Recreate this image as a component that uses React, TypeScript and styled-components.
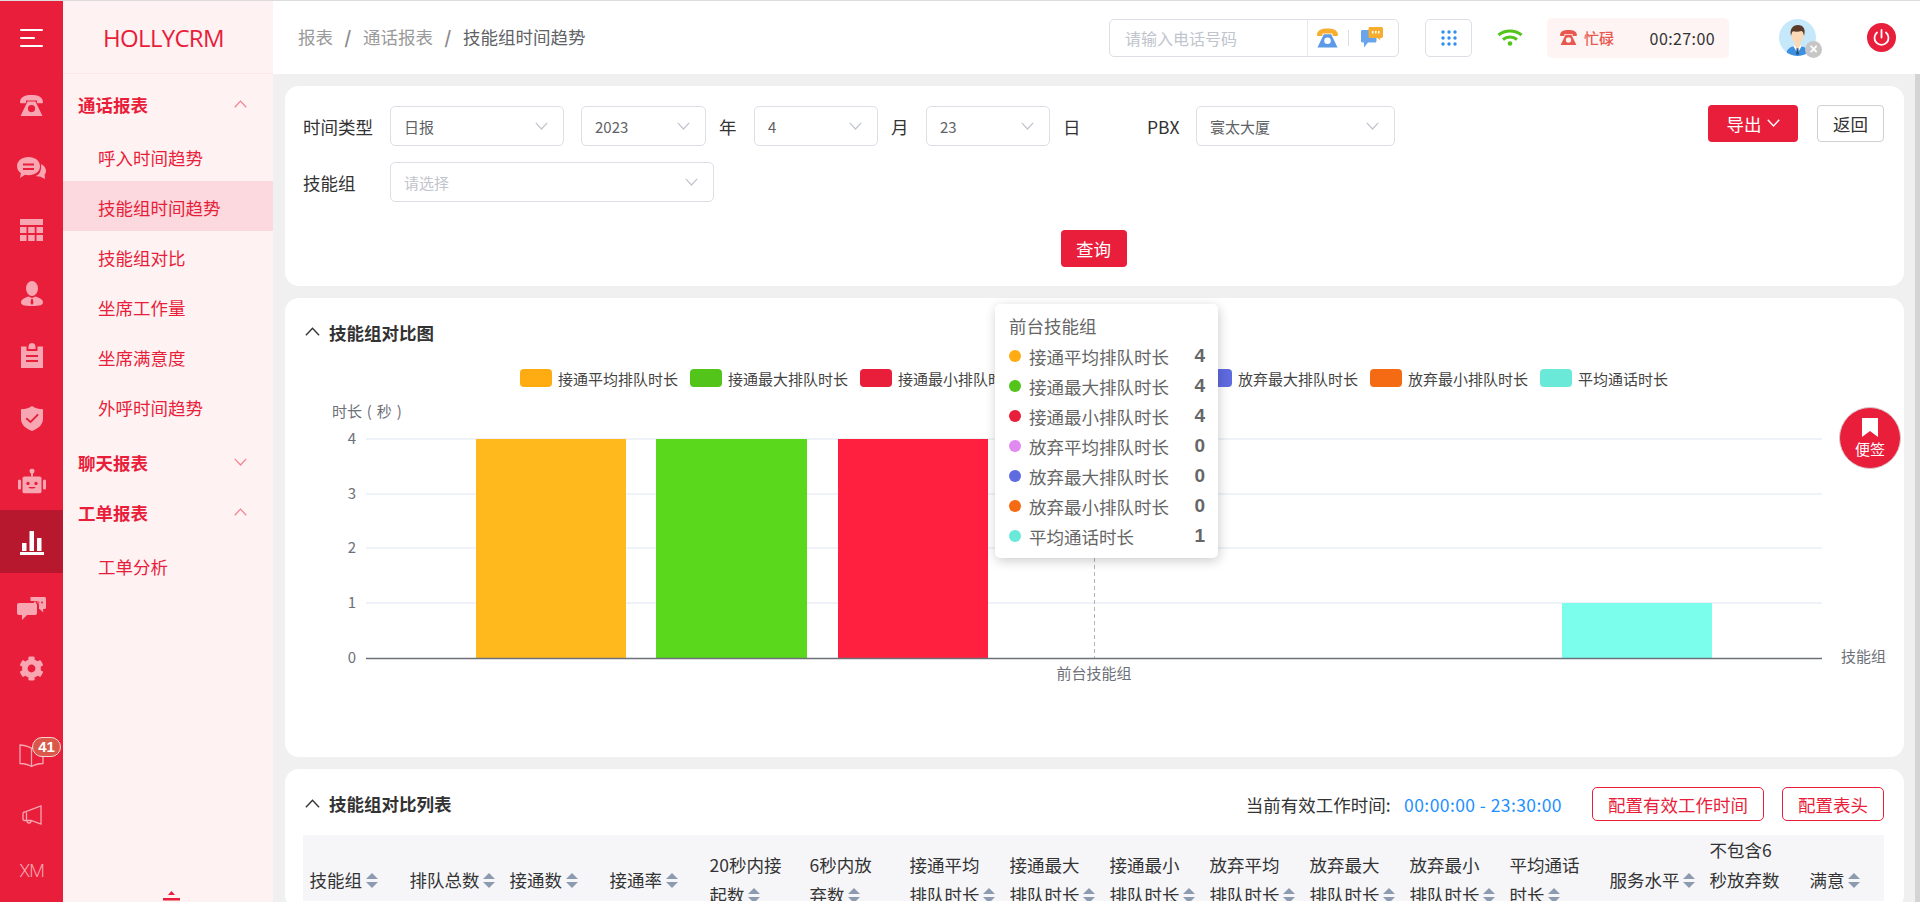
import React from "react";
import styled, { createGlobalStyle } from "styled-components";
import { FaCog } from "react-icons/fa";

const RED = "#e81e3a";
const SOFT = "#f8a6b2";
const FONT = `"Noto Sans CJK SC", "Noto Sans", sans-serif`;

const Global = createGlobalStyle`
  html, body { margin: 0; padding: 0; height: 100%; overflow: hidden; background: #f0f0f0; }
  body { font-family: ${FONT}; color: #333; }
  #root { height: 100%; }
  * { box-sizing: border-box; }
`;

const Page = styled.div`
  position: relative;
  display: flex;
  width: 1920px;
  height: 902px;
  border-top: 1px solid #dcdcdc;
  overflow: hidden;
`;

/* ---------- icon rail ---------- */
const Rail = styled.nav`
  width: 63px;
  flex: none;
  display: flex;
  flex-direction: column;
  background: ${RED};
  color: ${SOFT};
`;
const RailTop = styled.div`
  height: 73.5px;
  display: flex;
  align-items: center;
  justify-content: center;
  color: #fff;
`;
const RailItem = styled.div<{ $active?: boolean; $shift?: number; $h?: number }>`
  position: relative;
  height: ${(p) => p.$h ?? 62.25}px;
  flex: none;
  display: flex;
  align-items: center;
  justify-content: center;
  background: ${(p) => (p.$active ? "#b7182e" : "transparent")};
  color: ${(p) => (p.$active ? "#fff" : SOFT)};
  & > svg { transform: translateY(${(p) => p.$shift ?? 0}px); }
`;
const RailBottom = styled.div`
  margin-top: auto;
  padding-bottom: 1px;
`;
const Badge = styled.span`
  position: absolute;
  left: 32px;
  top: 16px;
  width: 29px;
  height: 20px;
  border: 1px solid #fbd5d5;
  border-radius: 10px;
  background: #d9584a;
  color: #fff;
  font: 700 15px/18px "Liberation Sans", sans-serif;
  text-align: center;
`;
const RailText = styled.span`
  font: 300 18px/1 Roboto, sans-serif;
  letter-spacing: -1px;
  color: ${SOFT};
`;

/* ---------- secondary nav ---------- */
const SubNav = styled.aside`
  width: 210px;
  flex: none;
  display: flex;
  flex-direction: column;
  background: #fef2f3;
  color: ${RED};
`;
const Logo = styled.div`
  height: 73px;
  flex: none;
  display: flex;
  align-items: center;
  justify-content: center;
  padding-right: 9px;
  border-bottom: 1px solid #fbe8ea;
  font: 400 24px "Open Sans", sans-serif;
  letter-spacing: -0.7px;
`;
const NavBody = styled.div`
  padding-top: 6px;
`;
const SectionTitle = styled.div`
  height: 50px;
  display: flex;
  align-items: center;
  justify-content: space-between;
  padding: 0 26px 2px 15px;
  font-size: 17.5px;
  font-weight: 700;
  & > svg { color: #f4808f; }
`;
const SubList = styled.div<{ $top?: number }>`
  padding: ${(p) => p.$top ?? 1}px 0 7px;
`;
const SubItem = styled.div<{ $active?: boolean }>`
  height: 50px;
  display: flex;
  align-items: center;
  padding: 3px 0 0 35px;
  font-size: 17.5px;
  background: ${(p) => (p.$active ? "#fbd9de" : "transparent")};
`;
const Collapse = styled.div`
  margin-top: auto;
  height: 20px;
  padding-left: 100px;
`;

/* ---------- main + header ---------- */
const Main = styled.main`
  flex: 1;
  min-width: 0;
  display: flex;
  flex-direction: column;
`;
const Header = styled.header`
  height: 73px;
  flex: none;
  display: flex;
  align-items: center;
  padding: 0 24px 0 25px;
  background: #fff;
`;
const Crumbs = styled.div`
  display: flex;
  align-items: center;
  margin-top: -3px;
  font-size: 17.5px;
  color: #9a9a9a;
`;
const CrumbSep = styled.span`
  width: 30px;
  text-align: center;
  font-weight: 700;
  color: #8a8a8a;
`;
const CrumbLast = styled.span`
  color: #606266;
`;
const SearchBox = styled.div`
  margin-left: auto;
  width: 290px;
  height: 38px;
  display: flex;
  border: 1px solid #dcdfe6;
  border-radius: 5px;
`;
const SearchHint = styled.div`
  flex: 1;
  padding-left: 15px;
  font-size: 16px;
  line-height: 36px;
  color: #c0c4cc;
`;
const SearchTools = styled.div`
  width: 91px;
  flex: none;
  display: flex;
  align-items: center;
  padding-left: 9px;
  border-left: 1px solid #e8e9ee;
`;
const ToolSep = styled.i`
  width: 1px;
  height: 16px;
  margin: 0 12px 0 10px;
  background: #dcdfe6;
`;
const GridBtn = styled.div`
  margin-left: 26px;
  width: 47px;
  height: 38px;
  display: flex;
  align-items: center;
  justify-content: center;
  border: 1px solid #dcdfe6;
  border-radius: 5px;
`;
const WifiWrap = styled.div`
  margin-left: 25px;
  display: flex;
`;
const Busy = styled.div`
  margin-left: 24px;
  width: 182px;
  height: 40px;
  display: flex;
  align-items: center;
  padding: 0 14px 0 13px;
  border-radius: 5px;
  background: #fef4f3;
`;
const BusyLabel = styled.span`
  margin-left: 7px;
  font-size: 15px;
  font-weight: 500;
  color: #e8584f;
`;
const BusyTime = styled.span`
  margin-left: auto;
  font-size: 16px;
  letter-spacing: 0.4px;
  color: #333;
`;
const AvatarWrap = styled.div`
  position: relative;
  margin-left: 50px;
  width: 37px;
  height: 37px;
`;
const AvatarX = styled.span`
  position: absolute;
  left: 26px;
  top: 22px;
  width: 17px;
  height: 17px;
  border-radius: 50%;
  background: #c6c6c6;
  color: #fff;
  font: 700 14px/17px "Liberation Sans", sans-serif;
  text-align: center;
`;
const PowerWrap = styled.div`
  margin-left: 51px;
  display: flex;
`;

/* ---------- content ---------- */
const Below = styled.div`
  flex: 1;
  min-height: 0;
  display: flex;
`;
const Content = styled.div`
  flex: 1;
  min-width: 0;
  display: flex;
  flex-direction: column;
  gap: 12px;
  padding: 12px 11px 0 12px;
`;
const ScrollBar = styled.div`
  width: 5px;
  flex: none;
  background: #d4d4d4;
`;
const Card = styled.section<{ $h?: number }>`
  position: relative;
  flex: none;
  ${(p) => (p.$h ? `height: ${p.$h}px;` : "")}
  border-radius: 14px;
  background: #fff;
`;

/* filter card */
const FilterCard = styled(Card)`
  padding: 20px 20px 0 18px;
`;
const FilterRow = styled.div`
  display: flex;
  align-items: center;
  margin-bottom: 16px;
`;
const FieldLabel = styled.label`
  width: 87px;
  flex: none;
  font-size: 17.5px;
  color: #333;
`;
const Select = styled.div<{ $w: number; $placeholder?: boolean; $after?: number }>`
  width: ${(p) => p.$w}px;
  height: 40px;
  flex: none;
  display: flex;
  align-items: center;
  justify-content: space-between;
  margin-right: ${(p) => p.$after ?? 0}px;
  padding: 0 15px 0 13px;
  border: 1px solid #dcdfe6;
  border-radius: 5px;
  font-size: 15px;
  color: ${(p) => (p.$placeholder ? "#c0c4cc" : "#606266")};
  & > svg { color: #c0c4cc; }
`;
const Unit = styled.span`
  width: 17.5px;
  margin: 0 17.5px 0 13px;
  flex: none;
  font-size: 17.5px;
`;
const PbxLabel = styled.span`
  margin-left: 49px;
  width: 49px;
  flex: none;
  font-size: 17.5px;
`;
const FilterActions = styled.div`
  margin-left: auto;
  align-self: flex-start;
  display: flex;
  gap: 19px;
  margin-top: -1px;
`;
const PrimaryBtn = styled.button<{ $w: number }>`
  width: ${(p) => p.$w}px;
  height: 37px;
  display: inline-flex;
  align-items: center;
  justify-content: center;
  gap: 5px;
  padding: 0;
  border: 0;
  border-radius: 4px;
  background: ${RED};
  color: #fff;
  font: 400 17.5px ${FONT};
`;
const PlainBtn = styled.button`
  width: 67px;
  height: 37px;
  padding: 0;
  border: 1px solid #d0d0d0;
  border-radius: 4px;
  background: #fff;
  color: #333;
  font: 400 17.5px ${FONT};
`;
const QueryRow = styled.div`
  display: flex;
  justify-content: center;
  margin-top: 28px;
`;

/* chart card */
const CardTitleRow = styled.div<{ $h: number; $top?: number; $bottom?: number }>`
  height: ${(p) => p.$h}px;
  display: flex;
  align-items: center;
  padding: ${(p) => p.$top ?? 0}px 20px ${(p) => p.$bottom ?? 0}px 20px;
`;
const CardTitle = styled.h3<{ $lift?: number }>`
  margin: 0 0 ${(p) => p.$lift ?? 0}px 9px;
  font-size: 17.5px;
  font-weight: 700;
  color: #333;
`;
const Legend = styled.div`
  height: 20px;
  display: flex;
  justify-content: center;
  padding-right: 2px;
`;
const LegendItem = styled.div`
  width: 170px;
  display: flex;
  align-items: center;
  font-size: 15px;
  color: #444;
  white-space: nowrap;
  &:last-child { width: 127px; }
`;
const Swatch = styled.i<{ $c: string }>`
  width: 32px;
  height: 18px;
  margin-right: 6px;
  flex: none;
  border-radius: 4px;
  background: ${(p) => p.$c};
`;
const ChartSvg = styled.svg`
  display: block;
  font-family: ${FONT};
`;
const Tip = styled.div`
  position: absolute;
  left: 710px;
  top: 6px;
  width: 223px;
  padding: 7px 13px 7px 14px;
  border-radius: 5px;
  background: #fff;
  box-shadow: 1px 3px 12px rgba(0, 0, 0, 0.2);
  font-size: 17.5px;
  color: #666;
`;
const TipTitle = styled.div`
  height: 30px;
  line-height: 30px;
`;
const TipRow = styled.div`
  height: 30px;
  display: flex;
  align-items: center;
`;
const TipDot = styled.i<{ $c: string }>`
  width: 12px;
  height: 12px;
  margin-right: 8px;
  border-radius: 50%;
  background: ${(p) => p.$c};
`;
const TipValue = styled.b`
  margin-left: auto;
  font: 700 19px "Liberation Sans", sans-serif;
`;

/* table card */
const TableActions = styled.div`
  margin-left: auto;
  display: flex;
  align-items: center;
  font-size: 17.5px;
  color: #333;
`;
const WorkTime = styled.span`
  margin: 0 30px 0 13.5px;
  letter-spacing: 0.42px;
  color: #1e90ff;
`;
const OutlineBtn = styled.button<{ $w: number; $left?: number }>`
  width: ${(p) => p.$w}px;
  height: 34px;
  margin-left: ${(p) => p.$left ?? 0}px;
  padding: 0;
  border: 1px solid ${RED};
  border-radius: 5px;
  background: #fff;
  color: ${RED};
  font: 400 17.5px ${FONT};
`;
const TableClip = styled.div`
  margin: 0 20px 0 18px;
  overflow: hidden;
  height: 66px;
`;
const HeadTable = styled.table`
  width: 1600px;
  table-layout: fixed;
  border-collapse: collapse;
`;
const Th = styled.th`
  width: 100px;
  height: 88px;
  padding: 0 6.5px;
  background: #f6f6f9;
  color: #333;
  font-size: 17.5px;
  font-weight: 400;
  line-height: 30px;
  text-align: left;
  white-space: nowrap;
`;
const Caret = styled.span`
  display: inline-flex;
  flex-direction: column;
  gap: 3px;
  margin-left: 3.5px;
  vertical-align: middle;
  margin-bottom: 3px;
  &::before, &::after {
    content: "";
    width: 0;
    height: 0;
    border-left: 6px solid transparent;
    border-right: 6px solid transparent;
  }
  &::before { border-bottom: 6px solid #8c9bb0; }
  &::after { border-top: 6px solid #8c9bb0; }
`;

/* floating note */
const Note = styled.div`
  position: absolute;
  left: 1839px;
  top: 406px;
  width: 62px;
  height: 62px;
  display: flex;
  flex-direction: column;
  align-items: center;
  gap: 2px;
  padding-top: 10px;
  border: 1px solid #d8c8ca;
  border-radius: 50%;
  background: ${RED};
  color: #fff;
  font-size: 15px;
  line-height: 20px;
`;

/* ---------- small drawings ---------- */
const Chev = ({ up, size = 13, w = 1.2 }: { up?: boolean; size?: number; w?: number }) => (
  <svg width={size} height={size * 0.62} viewBox="0 0 13 8" fill="none" stroke="currentColor" strokeWidth={w}>
    <path d={up ? "M0.8 7.2 6.5 1l5.7 6.2" : "M0.8 0.8 6.5 7l5.7-6.2"} />
  </svg>
);

const PhoneShape = ({ w, c }: { w: number; c: string }) => (
  <svg width={w} height={w * 0.91} viewBox="0 0 23 21" fill={c}>
    <path d="M0 7.2C0 1.6 5.5 0 11.5 0S23 1.6 23 7.2c0 .7-.3 1-1 1h-4c-.7 0-1-.3-1-1V5.5H6v1.700c0 .7-.3 1-1 1H1c-.7 0-1-.3-1-1z" />
    <path fillRule="evenodd" d="M7.5 6.5h8L22.5 21H.5zM11.5 10a3.6 3.6 0 1 0 0 7.2 3.6 3.6 0 0 0 0-7.2z" />
  </svg>
);
const IconChat = () => (
  <svg width="29" height="22" viewBox="0 0 29 22" fill="currentColor">
    <path d="M24 7c2.800 1.200 5 3.800 5 6.800 0 1.600-.6 3-1.400 4l.4 4.200-5-2.600c-1.500.3-3 .2-4.300-.3 3-1.200 6-4 5.300-12.100z" />
    <path fillRule="evenodd" d="M11.500 0C18 0 23 3.800 23 9.200S18 18.200 11.500 18.200c-1.200 0-2.500-.2-3.500-.4L3 21l.9-4.800C1.500 14.600 0 12 0 9.200 0 3.800 5 0 11.500 0zM6 6.500v2h11v-2zm0 4.500v2h11v-2z" />
  </svg>
);
const IconGrid = () => (
  <svg width="23" height="22" viewBox="0 0 23 22" fill="currentColor">
    <rect width="23" height="6" />
    <rect y="8" width="6.500" height="6" /><rect x="8.200" y="8" width="6.500" height="6" /><rect x="16.500" y="8" width="6.500" height="6" />
    <rect y="16" width="6.500" height="6" /><rect x="8.200" y="16" width="6.500" height="6" /><rect x="16.500" y="16" width="6.500" height="6" />
  </svg>
);
const IconPerson = () => (
  <svg width="22" height="25" viewBox="0 0 22 25" fill="currentColor">
    <ellipse cx="11" cy="7.500" rx="6" ry="7.500" />
    <path fillRule="evenodd" d="M7.500 15.500C3 17 0 18.500 0 21.500 0 24 3 25 11 25s11-1 11-3.500c0-3-3-4.500-7.500-6L11 17zM10.200 18h1.600l.7 4-1.500 2-1.500-2z" />
  </svg>
);
const IconClipboard = () => (
  <svg width="22" height="25" viewBox="0 0 22 25" fill="currentColor">
    <path fillRule="evenodd" d="M7.500 3.500C7.500 1.500 9 0 11 0s3.500 1.500 3.500 3.500V6h-7zM0 3.500h5.500V8h11V3.500H22V25H0zM5 12v2h12v-2zm0 5v2h12v-2z" />
  </svg>
);
const IconShield = () => (
  <svg width="22" height="25" viewBox="0 0 22 25" fill="currentColor">
    <path fillRule="evenodd" d="M11 0c2.500 1.800 6 3 11 3.300V13c0 5.500-4.500 9.500-11 12C4.500 22.500 0 18.500 0 13V3.300C5 3 8.500 1.800 11 0zM5.800 11.500 4.600 13l5 4.300L17.800 9l-1.400-1.300-6.900 7z" />
  </svg>
);
const IconRobot = () => (
  <svg width="28" height="25" viewBox="0 0 28 25" fill="currentColor">
    <circle cx="14" cy="2.500" r="2.500" />
    <rect x="13" y="4" width="2" height="4" />
    <path fillRule="evenodd" d="M6.500 8h15c1.200 0 2 .8 2 2v13c0 1.200-.8 2-2 2h-15c-1.200 0-2-.8-2-2V10c0-1.200.8-2 2-2zM10 13.200a1.700 1.700 0 1 0 0 3.400 1.700 1.700 0 0 0 0-3.400zm8 0a1.700 1.700 0 1 0 0 3.400 1.700 1.700 0 0 0 0-3.400zM10.500 18.500c0 2 7 2 7 0z" />
    <rect x="0" y="11" width="3" height="10" rx="1.500" />
    <rect x="25" y="11" width="3" height="10" rx="1.500" />
  </svg>
);
const IconBars = () => (
  <svg width="24" height="24" viewBox="0 0 24 24" fill="currentColor">
    <rect x="2" y="12" width="4.500" height="8" rx=".5" />
    <rect x="9.500" y="0" width="4.500" height="20" rx=".5" />
    <rect x="17" y="7" width="4.500" height="13" rx=".5" />
    <rect x="0" y="21" width="24" height="3" />
  </svg>
);
const IconChat2 = () => (
  <svg width="29" height="23" viewBox="0 0 29 23" fill="currentColor">
    <path d="M2 6h16c1.200 0 2 .8 2 2v8c0 1.200-.8 2-2 2H10l-5 5v-5H2c-1.200 0-2-.8-2-2V8c0-1.200.8-2 2-2z" />
    <path fillRule="evenodd" d="M14 0h13.500c.9 0 1.500.6 1.500 1.500v9c0 .9-.6 1.500-1.500 1.500H26l.3 3.500-3.800-3.500h-.5V7c0-2-1.500-3-3-3h-5.500V1c0-.6 0-1 .5-1zM18 4.500a1 1 0 1 0 0 2 1 1 0 0 0 0-2zm3.500 0a1 1 0 1 0 0 2 1 1 0 0 0 0-2zm3.500 0a1 1 0 1 0 0 2 1 1 0 0 0 0-2z" />
  </svg>
);
const IconBook = () => (
  <svg width="25" height="24" viewBox="0 0 25 24" fill="none" stroke="currentColor" strokeWidth="1.300">
    <path d="M12.500 4.500C10 2 6 1.500 1 1v18.500c5 .3 8.500 1 11.500 3 3-2 6.500-2.700 11.500-3V1c-5 .5-9 1-11.500 3.500zM12.500 4.500v18" />
  </svg>
);
const IconHorn = () => (
  <svg width="20" height="20" viewBox="0 0 20 20" fill="none" stroke="currentColor" strokeWidth="1.300">
    <path d="M19 1v18L9 15.500H2.500C1.500 15.500 1 15 1 14V8.500c0-.8.500-1.300 1.500-1.500zM4.500 7.500v8M5 15.500c0 2 1 2.500 2 2.500s2-.5 2-2" />
  </svg>
);
const IconMsgColor = () => (
  <svg width="22" height="21" viewBox="0 0 22 21">
    <path fill="#6aa5ec" d="M1.500 3H14c.8 0 1.500.7 1.500 1.500V14c0 .8-.7 1.500-1.500 1.500H7L3 20.500v-5H1.500C.7 15.500 0 14.800 0 14V4.500C0 3.700.7 3 1.500 3z" />
    <path fill="#f7ae2f" d="M9 0h11.500c.8 0 1.500.7 1.500 1.500v8c0 .8-.7 1.500-1.500 1.500H19l.5 2.500-3-2.500H9c-.8 0-1.500-.7-1.500-1.500v-8C7.500.7 8.200 0 9 0z" />
    <g fill="#fff"><rect x="11" y="4" width="1.500" height="2.500" /><rect x="14" y="4" width="1.500" height="2.500" /><rect x="17" y="4" width="1.500" height="2.500" /></g>
  </svg>
);
const IconPhoneColor = () => (
  <svg width="21" height="20" viewBox="0 0 23 21">
    <path fill="#f7ae2f" d="M0 7.200C0 1.600 5.500 0 11.500 0S23 1.600 23 7.200c0 .7-.3 1-1 1h-4c-.7 0-1-.3-1-1V5.500H6v1.700c0 .7-.3 1-1 1H1c-.7 0-1-.3-1-1z" />
    <path fill="#5b9ae8" fillRule="evenodd" d="M7.500 6.500h8L22.500 21H.5zM11.500 10a3.600 3.600 0 1 0 0 7.200 3.600 3.600 0 0 0 0-7.200z" />
  </svg>
);
const IconDots = () => (
  <svg width="16" height="16" viewBox="0 0 16 16" fill="#2f8ff0">
    {[2, 8, 14].flatMap((y) => [2, 8, 14].map((x) => <circle key={`${x}-${y}`} cx={x} cy={y} r="1.700" />))}
  </svg>
);
const IconWifi = () => (
  <svg width="26" height="17" viewBox="0 0 26 17" fill="none" stroke="#52c41a" strokeWidth="3">
    <path d="M1.500 6C8 .5 18 .5 24.500 6M6 10.500c4-3.300 10-3.300 14 0" />
    <circle cx="13" cy="14.500" r="2.300" fill="#52c41a" stroke="none" />
  </svg>
);
const IconAvatar = () => (
  <svg width="37" height="37" viewBox="0 0 37 37">
    <circle cx="18.500" cy="18.500" r="18.500" fill="#c5e8fb" />
    <clipPath id="av"><circle cx="18.500" cy="18.500" r="18.500" /></clipPath>
    <g clipPath="url(#av)">
      <path fill="#3d8fe0" d="M7 37c0-7 4-10 11.500-10S30 30 30 37z" />
      <path fill="#fff" d="M14 26.500h9l-4.500 8z" />
      <path fill="#23557f" d="M17.700 28.500h1.600l.7 7h-3z" />
      <path fill="#fcd9b6" d="M15.500 21h6v6l-3 2.500-3-2.500z" />
      <ellipse cx="18.500" cy="16" rx="6" ry="8" fill="#fcd9b6" />
      <path fill="#5a3a28" d="M12 17c-1.500-7 1.500-11 7-11s8 4 6 11c-.5-3-1.200-4.500-2.500-5-3 .8-6 .8-8.500.3-1.200 1-1.600 2.500-2 4.700z" />
    </g>
  </svg>
);
const IconPower = () => (
  <svg width="29" height="29" viewBox="0 0 29 29">
    <circle cx="14.500" cy="14.500" r="14.500" fill={RED} />
    <path d="M10 9.500a7 7 0 1 0 9 0M14.500 7v7.500" fill="none" stroke="#fff" strokeWidth="1.800" strokeLinecap="round" />
  </svg>
);

const series = [
  ["接通平均排队时长", "#ffab12", "4"],
  ["接通最大排队时长", "#52c41a", "4"],
  ["接通最小排队时长", RED, "4"],
  ["放弃平均排队时长", "#e08af0", "0"],
  ["放弃最大排队时长", "#5f6be0", "0"],
  ["放弃最小排队时长", "#f46b13", "0"],
  ["平均通话时长", "#6ae8d8", "1"],
];

const ticks: [string, number][] = [["4", 439], ["3", 494], ["2", 548], ["1", 603]];

const Chart = () => (
  <ChartSvg width="1619" height="369" viewBox="285 388 1619 369">
    {ticks.map(([t, y]) => (
      <g key={t}>
        <line x1="366" x2="1822" y1={y} y2={y} stroke="#e0e6f1" strokeWidth="1.200" />
        <text x="356" y={y + 4.500} textAnchor="end" fontSize="15" fill="#6e7079">{t}</text>
      </g>
    ))}
    <text x="356" y="662.500" textAnchor="end" fontSize="15" fill="#6e7079">0</text>
    <text x="332" y="417" fontSize="15" fill="#6e7079" wordSpacing="1.500">时长 ( 秒 )</text>
    <line x1="1094.500" x2="1094.500" y1="439" y2="658" stroke="#b5b5b5" strokeDasharray="4 3" />
    <rect x="476" y="439" width="150" height="219" fill="#ffb91c" />
    <rect x="656" y="439" width="151" height="219" fill="#59d81c" />
    <rect x="838" y="439" width="150" height="219" fill="#ff1f3e" />
    <rect x="1562" y="603" width="150" height="55" fill="#7bffec" />
    <line x1="366" x2="1822" y1="658.500" y2="658.500" stroke="#6e7079" strokeWidth="1.300" />
    <text x="1094" y="679" textAnchor="middle" fontSize="15" fill="#6e7079">前台技能组</text>
    <text x="1841" y="662" fontSize="15" fill="#6e7079">技能组</text>
  </ChartSvg>
);

const columns: string[][] = [
  ["技能组"], ["排队总数"], ["接通数"], ["接通率"], ["20秒内接", "起数"], ["6秒内放", "弃数"],
  ["接通平均", "排队时长"], ["接通最大", "排队时长"], ["接通最小", "排队时长"], ["放弃平均", "排队时长"],
  ["放弃最大", "排队时长"], ["放弃最小", "排队时长"], ["平均通话", "时长"], ["服务水平"],
  ["不包含6", "秒放弃数", "接通率"], ["满意"],
];

export default function App() {
  return (
    <Page>
      <Global />
      <Rail>
        <RailTop>
          <svg width="23" height="18" viewBox="0 0 23 18" fill="#fff">
            <rect width="23" height="2" rx="1" /><rect y="8" width="15" height="2" rx="1" /><rect y="16" width="23" height="2" rx="1" />
          </svg>
        </RailTop>
        <RailItem><PhoneShape w={23} c="currentColor" /></RailItem>
        <RailItem><IconChat /></RailItem>
        <RailItem><IconGrid /></RailItem>
        <RailItem $shift={1}><IconPerson /></RailItem>
        <RailItem $shift={1}><IconClipboard /></RailItem>
        <RailItem $shift={2}><IconShield /></RailItem>
        <RailItem $shift={1.5}><IconRobot /></RailItem>
        <RailItem $active $shift={2}><IconBars /></RailItem>
        <RailItem $shift={5}><IconChat2 /></RailItem>
        <RailItem $shift={3}><FaCog size={25} /></RailItem>
        <RailBottom>
          <RailItem $h={60} $shift={5}><IconBook /><Badge>41</Badge></RailItem>
          <RailItem $h={60} $shift={4}><IconHorn /></RailItem>
          <RailItem $h={60}><RailText>XM</RailText></RailItem>
        </RailBottom>
      </Rail>

      <SubNav>
        <Logo>HOLLYCRM</Logo>
        <NavBody>
          <SectionTitle>通话报表<Chev up /></SectionTitle>
          <SubList>
            <SubItem>呼入时间趋势</SubItem>
            <SubItem $active>技能组时间趋势</SubItem>
            <SubItem>技能组对比</SubItem>
            <SubItem>坐席工作量</SubItem>
            <SubItem>坐席满意度</SubItem>
            <SubItem>外呼时间趋势</SubItem>
          </SubList>
          <SectionTitle>聊天报表<Chev /></SectionTitle>
          <SectionTitle>工单报表<Chev up /></SectionTitle>
          <SubList $top={2}><SubItem>工单分析</SubItem></SubList>
        </NavBody>
        <Collapse>
          <svg width="17" height="10" viewBox="0 0 17 10" fill={RED}>
            <path d="M8.500 0 12 4H5z" /><rect y="7" width="17" height="2.500" />
          </svg>
        </Collapse>
      </SubNav>

      <Main>
        <Header>
          <Crumbs>
            <span>报表</span><CrumbSep>/</CrumbSep><span>通话报表</span><CrumbSep>/</CrumbSep><CrumbLast>技能组时间趋势</CrumbLast>
          </Crumbs>
          <SearchBox>
            <SearchHint>请输入电话号码</SearchHint>
            <SearchTools><IconPhoneColor /><ToolSep /><IconMsgColor /></SearchTools>
          </SearchBox>
          <GridBtn><IconDots /></GridBtn>
          <WifiWrap><IconWifi /></WifiWrap>
          <Busy>
            <PhoneShape w={17} c="#e8584f" />
            <BusyLabel>忙碌</BusyLabel>
            <BusyTime>00:27:00</BusyTime>
          </Busy>
          <AvatarWrap><IconAvatar /><AvatarX>×</AvatarX></AvatarWrap>
          <PowerWrap><IconPower /></PowerWrap>
        </Header>

        <Below>
          <Content>
            <FilterCard $h={200}>
              <FilterRow>
                <FieldLabel>时间类型</FieldLabel>
                <Select $w={174} $after={17}>日报<Chev size={13} /></Select>
                <Select $w={125}>2023<Chev size={13} /></Select>
                <Unit>年</Unit>
                <Select $w={124}>4<Chev size={13} /></Select>
                <Unit>月</Unit>
                <Select $w={124}>23<Chev size={13} /></Select>
                <Unit>日</Unit>
                <PbxLabel>PBX</PbxLabel>
                <Select $w={199}>寰太大厦<Chev size={13} /></Select>
                <FilterActions>
                  <PrimaryBtn $w={90}>导出<Chev size={13} w={1.4} /></PrimaryBtn>
                  <PlainBtn>返回</PlainBtn>
                </FilterActions>
              </FilterRow>
              <FilterRow>
                <FieldLabel>技能组</FieldLabel>
                <Select $w={324} $placeholder>请选择<Chev size={13} /></Select>
              </FilterRow>
              <QueryRow><PrimaryBtn $w={66}>查询</PrimaryBtn></QueryRow>
            </FilterCard>

            <Card $h={459}>
              <CardTitleRow $h={70} $bottom={2}><Chev up size={15} /><CardTitle>技能组对比图</CardTitle></CardTitleRow>
              <Legend>
                {series.map(([name, c]) => (
                  <LegendItem key={name}><Swatch $c={c} />{name}</LegendItem>
                ))}
              </Legend>
              <Chart />
              <Tip>
                <TipTitle>前台技能组</TipTitle>
                {series.map(([name, c, v]) => (
                  <TipRow key={name}><TipDot $c={c} />{name}<TipValue>{v}</TipValue></TipRow>
                ))}
              </Tip>
            </Card>

            <Card $h={140}>
              <CardTitleRow $h={66} $top={4}>
                <Chev up size={15} />
                <CardTitle $lift={2}>技能组对比列表</CardTitle>
                <TableActions>
                  当前有效工作时间:
                  <WorkTime>00:00:00 - 23:30:00</WorkTime>
                  <OutlineBtn $w={172}>配置有效工作时间</OutlineBtn>
                  <OutlineBtn $w={102} $left={18}>配置表头</OutlineBtn>
                </TableActions>
              </CardTitleRow>
              <TableClip>
                <HeadTable>
                  <thead>
                    <tr>
                      {columns.map((lines, i) => (
                        <Th key={i}>
                          {lines.map((l, j) => (
                            <React.Fragment key={j}>
                              {j > 0 && <br />}
                              {l}
                              {j === lines.length - 1 && <Caret />}
                            </React.Fragment>
                          ))}
                        </Th>
                      ))}
                    </tr>
                  </thead>
                </HeadTable>
              </TableClip>
            </Card>
          </Content>
          <ScrollBar />
        </Below>
      </Main>

      <Note>
        <svg width="16" height="19" viewBox="0 0 16 19" fill="#fff"><path d="M0 0h16v19l-8-6-8 6z" /></svg>
        便签
      </Note>
    </Page>
  );
}
